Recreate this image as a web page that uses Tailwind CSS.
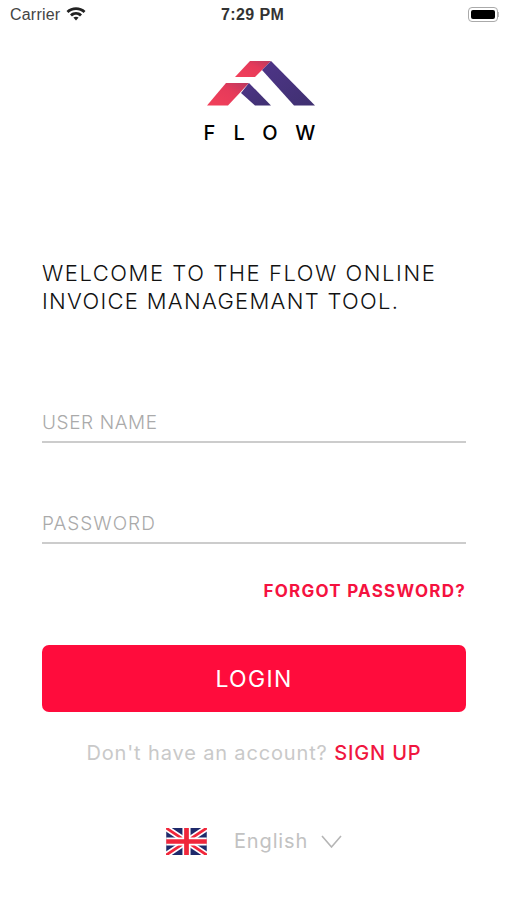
<!DOCTYPE html>
<html lang="en">
<head>
    <meta charset="UTF-8">
    <meta name="viewport" content="width=device-width, initial-scale=1.0">
    <title>Flow Login</title>
    <script src="https://cdn.jsdelivr.net/npm/@tailwindcss/browser@4"></script>
</head>
<body class="bg-white h-[900px] overflow-hidden font-['Inter',sans-serif]">

    <!-- STATUS BAR -->
    <div class="relative h-[29px] flex items-center justify-between pl-[10px] pr-[8px] text-[#333] font-['Liberation_Sans',sans-serif]">
        <div class="flex items-center gap-[7px]">
            <span class="text-[16px] text-[#444] tracking-[0.2px]">Carrier</span>
            <svg class="-mt-[2px] -ml-[1px]" width="20" height="15" viewBox="0 0 20 15">
                <path d="M0.5 5 C5.5 0 14.5 0 19.5 5 L17.6 7 C13.5 3 6.5 3 2.4 7 Z" fill="#222"/>
                <path d="M4 8.4 C7.5 5.2 12.5 5.2 16 8.4 L14 10.4 C11.5 8.2 8.5 8.2 6 10.4 Z" fill="#222"/>
                <path d="M7.4 11.6 C9 10.4 11 10.4 12.6 11.6 L10 14.4 Z" fill="#222"/>
            </svg>
        </div>
        <span class="absolute left-[221px] text-[16px] font-bold tracking-[0.4px]">7:29 PM</span>
        <div class="flex items-center">
            <div class="w-[30px] h-[15px] rounded-[4px] border border-[#aaa] p-[2px]">
                <div class="w-full h-full rounded-[2px] bg-black"></div>
            </div>
            <div class="w-[1px] h-[5px] bg-[#bbb]"></div>
        </div>
    </div>

    <!-- LOGO -->
    <div class="flex flex-col items-center mt-[32px]">
        <svg class="ml-[13px]" width="110" height="46" viewBox="205 61 110 46">
            <defs>
                <linearGradient id="red" x1="0" y1="1" x2="1" y2="0">
                    <stop offset="0" stop-color="#f2405a"/>
                    <stop offset="0.6" stop-color="#e63a5a"/>
                    <stop offset="1" stop-color="#b9395f"/>
                </linearGradient>
                <linearGradient id="purple" x1="0" y1="0" x2="1" y2="1">
                    <stop offset="0" stop-color="#4e3588"/>
                    <stop offset="1" stop-color="#3f3070"/>
                </linearGradient>
            </defs>
            <path d="M235 77 L250 61 L271 61 L255 77 Z" fill="url(#red)"/>
            <path d="M271 61 L315 105.500 L294 105.500 L262 70 Z" fill="url(#purple)"/>
            <path d="M207 105.500 L226 83 L249 83 L228 105.500 Z" fill="url(#red)"/>
            <path d="M249 83 L271 105.500 L255 105.500 L241 93 Z" fill="url(#purple)"/>
        </svg>
        <div class="mt-[15px] ml-[16px] text-[20px] leading-[22px] font-medium text-black tracking-[18px] pl-[14px]">FLOW</div>
    </div>

    <main class="pl-[42px] pr-[41px]">
        <h1 class="mt-[115px] text-[22px] leading-[28px] font-light text-[#111] tracking-[1.55px]">WELCOME TO THE FLOW ONLINE<br><span class="tracking-[1.3px]">INVOICE MANAGEMANT TOOL.</span></h1>

        <form>
            <div class="mt-[91px] h-[37px] border-b-2 border-[#ccc] flex items-center text-[19px] font-light text-[#aaa] tracking-[0.6px]">USER NAME</div>
            <div class="mt-[64px] h-[37px] border-b-2 border-[#ccc] flex items-center text-[19px] font-light text-[#aaa] tracking-[1px]">PASSWORD</div>

            <div class="mt-[36px] text-right text-[17px] leading-[22px] font-bold text-[#f5123f] tracking-[1.25px]">FORGOT PASSWORD?</div>

            <button type="button" class="mt-[43px] w-full h-[67px] rounded-[7px] bg-[#ff0c3c] text-white text-[23px] font-normal tracking-[1.3px] pt-[1px]">LOGIN</button>
        </form>

        <p class="mt-[29px] text-center text-[20px] leading-[24px] text-[#c9c9c9] tracking-[0.85px]">Don't have an account? <span class="text-[#f0163f] font-medium">SIGN UP</span></p>

        <!-- LANGUAGE -->
        <div class="mt-[61px] flex items-center pl-[124px]">
            <svg width="41" height="27" viewBox="0 0 60 40">
                <rect width="60" height="40" fill="#1f2a6b"/>
                <path d="M0 0 L60 40 M60 0 L0 40" stroke="#fff" stroke-width="9"/>
                <path d="M0 0 L60 40 M60 0 L0 40" stroke="#f0263a" stroke-width="4"/>
                <path d="M30 0 V40 M0 20 H60" stroke="#fff" stroke-width="12"/>
                <path d="M30 0 V40 M0 20 H60" stroke="#f0263a" stroke-width="7"/>
            </svg>
            <div class="ml-[27px] flex items-center gap-[13px] text-[20px] text-[#c2c2c2] tracking-[0.85px]">
                <span>English</span>
                <svg width="21" height="13" viewBox="0 0 21 13" fill="none"><path d="M1 1 L10.5 12 L20 1" stroke="#b5b5b5" stroke-width="1.6"/></svg>
            </div>
        </div>
    </main>
</body>
</html>
